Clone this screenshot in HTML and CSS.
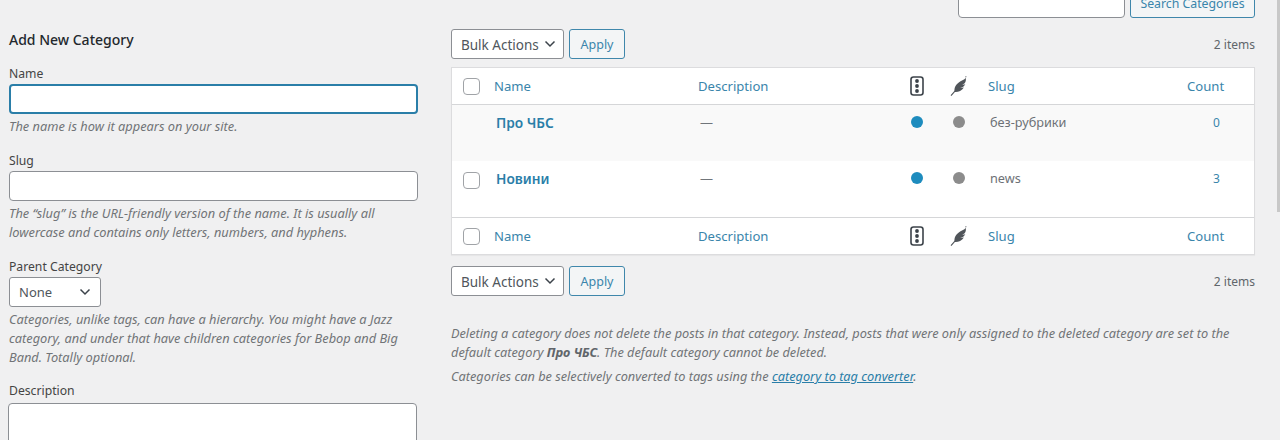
FILE: index.html
```html
<!DOCTYPE html>
<html lang="en">
<head>
<meta charset="utf-8">
<title>Categories</title>
<link rel="stylesheet" href="styles.css">
</head>
<body>
<div class="scroll-thumb"></div>
<div class="page">
  <form class="search-row">
    <input class="search-input" type="text" aria-label="Search">
    <button class="btn search-btn" type="button">Search Categories</button>
  </form>
  <div class="columns">
    <section class="col-left">
      <h2 class="form-title">Add New Category</h2>
      <div class="field">
        <label class="label">Name</label>
        <input class="text-input is-focus" type="text">
        <p class="hint">The name is how it appears on your site.</p>
      </div>
      <div class="field">
        <label class="label">Slug</label>
        <input class="text-input" type="text">
        <p class="hint">The “slug” is the URL-friendly version of the name. It is usually all<br>lowercase and contains only letters, numbers, and hyphens.</p>
      </div>
      <div class="field field-parent">
        <label class="label">Parent Category</label>
        <div class="select select-parent"><span>None</span><svg class="chev" viewBox="0 0 12 8"><path d="M1.500 1.500 6 6l4.500-4.500"/></svg></div>
        <p class="hint">Categories, unlike tags, can have a hierarchy. You might have a Jazz<br>category, and under that have children categories for Bebop and Big<br>Band. Totally optional.</p>
      </div>
      <div class="field">
        <label class="label label-desc">Description</label>
        <div class="textarea"></div>
      </div>
    </section>
    <section class="col-right">
      <div class="tablenav">
        <div class="select select-bulk"><span>Bulk Actions</span><svg class="chev" viewBox="0 0 12 8"><path d="M1.500 1.500 6 6l4.500-4.500"/></svg></div>
        <button class="btn" type="button">Apply</button>
        <span class="items">2 items</span>
      </div>
      <table class="list">
        <colgroup><col class="c-check"><col class="c-name"><col class="c-desc"><col class="c-light"><col class="c-feather"><col class="c-slug"><col class="c-count"></colgroup>
        <thead>
          <tr>
            <th class="cell-check"><span class="check"></span></th>
            <th><a>Name</a></th>
            <th><a>Description</a></th>
            <th class="cell-icon"><svg class="ic-light" viewBox="0 0 14 20"><rect x="1" y="1" width="12" height="18" rx="2.500"/><circle cx="7" cy="5" r="1.900"/><circle cx="7" cy="10" r="1.900"/><circle cx="7" cy="15" r="1.900"/></svg></th>
            <th class="cell-icon"><svg class="ic-feather" viewBox="0 0 18 20"><path d="M16.500.2c-.1 1.600-1.500 2.700-3.500 3.800C9 6 5.500 8.500 4.600 12.500l-.3 2.500L.6 19.200l.8.800 3.500-4c2.900.3 6.800-1 9-4.400-1.400.5-2.600.5-3.700.4 2.400-.5 4.100-1.800 5.100-3.700-1.100.4-2.200.5-3 .4 2-.7 3.200-2 3.500-3.900.3-1.900.1-3.500-.5-4.600z"/></svg></th>
            <th class="head-slug"><a>Slug</a></th>
            <th><a>Count</a></th>
          </tr>
        </thead>
        <tbody>
          <tr class="alt">
            <td></td>
            <td class="row-name"><a>Про ЧБС</a></td>
            <td class="row-desc">—</td>
            <td class="cell-icon"><span class="dot blue"></span></td>
            <td class="cell-icon"><span class="dot grey"></span></td>
            <td class="row-slug">без-рубрики</td>
            <td class="row-count"><a>0</a></td>
          </tr>
          <tr>
            <td class="cell-check-row"><span class="check"></span></td>
            <td class="row-name"><a>Новини</a></td>
            <td class="row-desc">—</td>
            <td class="cell-icon"><span class="dot blue"></span></td>
            <td class="cell-icon"><span class="dot grey"></span></td>
            <td class="row-slug">news</td>
            <td class="row-count"><a>3</a></td>
          </tr>
        </tbody>
        <tfoot>
          <tr>
            <th class="cell-check"><span class="check"></span></th>
            <th><a>Name</a></th>
            <th><a>Description</a></th>
            <th class="cell-icon"><svg class="ic-light" viewBox="0 0 14 20"><rect x="1" y="1" width="12" height="18" rx="2.500"/><circle cx="7" cy="5" r="1.900"/><circle cx="7" cy="10" r="1.900"/><circle cx="7" cy="15" r="1.900"/></svg></th>
            <th class="cell-icon"><svg class="ic-feather" viewBox="0 0 18 20"><path d="M16.500.2c-.1 1.600-1.500 2.700-3.500 3.800C9 6 5.500 8.500 4.600 12.500l-.3 2.500L.6 19.200l.8.800 3.500-4c2.900.3 6.800-1 9-4.400-1.400.5-2.600.5-3.700.4 2.400-.5 4.100-1.800 5.100-3.700-1.100.4-2.200.5-3 .4 2-.7 3.200-2 3.500-3.900.3-1.900.1-3.500-.5-4.600z"/></svg></th>
            <th class="head-slug"><a>Slug</a></th>
            <th><a>Count</a></th>
          </tr>
        </tfoot>
      </table>
      <div class="tablenav tablenav-bottom">
        <div class="select select-bulk"><span>Bulk Actions</span><svg class="chev" viewBox="0 0 12 8"><path d="M1.500 1.500 6 6l4.500-4.500"/></svg></div>
        <button class="btn" type="button">Apply</button>
        <span class="items">2 items</span>
      </div>
      <div class="notes">
        <p>Deleting a category does not delete the posts in that category. Instead, posts that were only assigned to the deleted category are set to the<br>default category <strong>Про ЧБС</strong>. The default category cannot be deleted.</p>
        <p>Categories can be selectively converted to tags using the <a>category to tag converter</a>.</p>
      </div>
    </section>
  </div>
</div>
</body>
</html>
```
FILE: styles.css
```css
html, body {
  margin: 0;
  height: 440px;
  overflow: hidden;
  background: #f0f0f1;
}
body {
  font-family: "Noto Sans", "Open Sans", sans-serif;
  font-size: 12.2px;
  color: #3c434a;
}
.scroll-thumb {
  position: absolute;
  top: 0;
  right: 0;
  width: 3px;
  height: 212px;
  background: #c8c8c8;
}
.page {
  padding: 0 25px 0 9px;
  margin-top: -12px;
}
p { margin: 0; }

.search-row {
  display: flex;
  justify-content: flex-end;
  gap: 5px;
  height: 30px;
}
.search-input {
  box-sizing: border-box;
  width: 167px;
  height: 30px;
  border: 1px solid #8c8f94;
  border-radius: 4px;
  background: #fff;
  margin: 0;
}
.btn {
  box-sizing: border-box;
  height: 30px;
  padding: 0 10px;
  border: 1px solid #3f87ab;
  border-radius: 3px;
  background: #f3f5f6;
  color: #3a85ab;
  font: inherit;
  margin: 0;
}
.search-btn { width: 125px; padding: 0; font-size: 12.3px; }

.columns { display: flex; gap: 33px; align-items: flex-start; }
.col-left { width: 409px; flex: none; padding-top: 12px; }
.col-right { flex: 1; min-width: 0; }

.form-title {
  margin: 0 0 15px;
  font-size: 14px;
  line-height: 20px;
  font-weight: 500;
  color: #23282d;
}
.field { margin-bottom: 16px; }
.field-parent { margin-bottom: 15px; }
.label { display: block; line-height: 17px; margin-bottom: 2px; color: #444; }
.label-desc { margin-bottom: 4px; }
.text-input {
  display: block;
  box-sizing: border-box;
  width: 100%;
  height: 30px;
  margin: 0;
  background: #fff;
  border: 1px solid #8c8f94;
  border-radius: 4px;
}
.is-focus {
  border: 2px solid #2a7ea8;
}
.hint {
  margin-top: 3px;
  font-style: italic;
  font-size: 12.8px;
  line-height: 19px;
  color: #717477;
}
.select {
  box-sizing: border-box;
  display: flex;
  align-items: center;
  justify-content: space-between;
  height: 30px;
  padding: 0 7px 0 9px;
  background: #fff;
  border: 1px solid #8c8f94;
  border-radius: 3px;
  font-size: 13.5px;
  color: #50565c;
}
.select-parent { width: 92px; font-size: 13px; padding-right: 9px; }
.select-bulk { width: 113px; }
.select-bulk span { padding-top: 2px; }
.chev { width: 12px; height: 8px; flex: none; }
.chev path { fill: none; stroke: #3c434a; stroke-width: 1.500; }
.textarea {
  box-sizing: border-box;
  width: 409px;
  height: 100px;
  margin-left: -1px;
  background: #fff;
  border: 1px solid #8c8f94;
  border-radius: 4px;
}

.tablenav { display: flex; align-items: center; gap: 5px; height: 30px; margin: 11px 0 8px; }
.tablenav .btn { font-size: 12.5px; width: 56px; padding: 0; }
.tablenav-bottom { margin: 11px 0 0; }
.items { margin-left: auto; font-size: 12px; color: #60666b; }

.list {
  width: 804px;
  table-layout: fixed;
  border-collapse: separate;
  border-spacing: 0;
  background: #fff;
  border: 1px solid #dcdcde;
  box-shadow: 0 1px 1px rgba(0,0,0,.04);
}
.c-check { width: 42px; }
.c-name { width: 204px; }
.c-desc { width: 197px; }
.c-light { width: 43px; }
.c-feather { width: 42px; }
.c-slug { width: 207px; }
.list th, .list td { padding: 0; vertical-align: middle; text-align: left; font-weight: 400; }
.list th { height: 36px; font-size: 13.1px; }
.list thead th { border-bottom: 1px solid #d5d6d8; }
.list tfoot th { border-top: 1px solid #d5d6d8; height: 36px; }
.list a { color: #3a85ab; }
.check {
  display: block;
  box-sizing: border-box;
  width: 17px;
  height: 17px;
  margin-left: 11px;
  background: #fff;
  border: 1px solid #a0a3a7;
  border-radius: 4px;
}
.list td { height: 56px; vertical-align: top; padding-top: 8px; box-sizing: border-box; }
.alt td { background: #f9f9f9; }
.cell-check-row .check { margin-top: 3px; }
.list .row-name { padding-left: 2px; font-size: 13.7px; font-weight: 600; line-height: 19px; }
.list .row-name a { color: #2a7ea8; }
.list .row-desc { padding-left: 2px; font-size: 13px; line-height: 19px; color: #70757a; }
.list .row-slug { padding-left: 10px; font-size: 12.7px; line-height: 19px; color: #6d7176; }
.list .row-count { padding-left: 26px; font-size: 12px; line-height: 19px; }
.list .head-slug { padding-left: 8px; }
.list .cell-icon { text-align: center; }
.list th.cell-icon svg { display: block; margin: 0 auto; }
.ic-light { width: 14px; height: 20px; }
.ic-light rect { fill: none; stroke: #3c434a; stroke-width: 1.600; }
.ic-light circle { fill: #3c434a; }
.ic-feather { width: 18px; height: 20px; }
.ic-feather path { fill: #50555a; }
.dot { display: block; width: 12px; height: 12px; border-radius: 50%; margin: 3px auto 0; }
.blue { background: #1e8cbe; }
.grey { background: #8c8c8c; }

.notes { margin-top: 28px; font-style: italic; font-size: 12.75px; line-height: 19px; color: #717477; }
.notes p { margin-bottom: 5px; }
.notes a { color: #2a7ea8; text-decoration: underline; }
.notes strong { font-weight: 700; color: #60656a; }
```
